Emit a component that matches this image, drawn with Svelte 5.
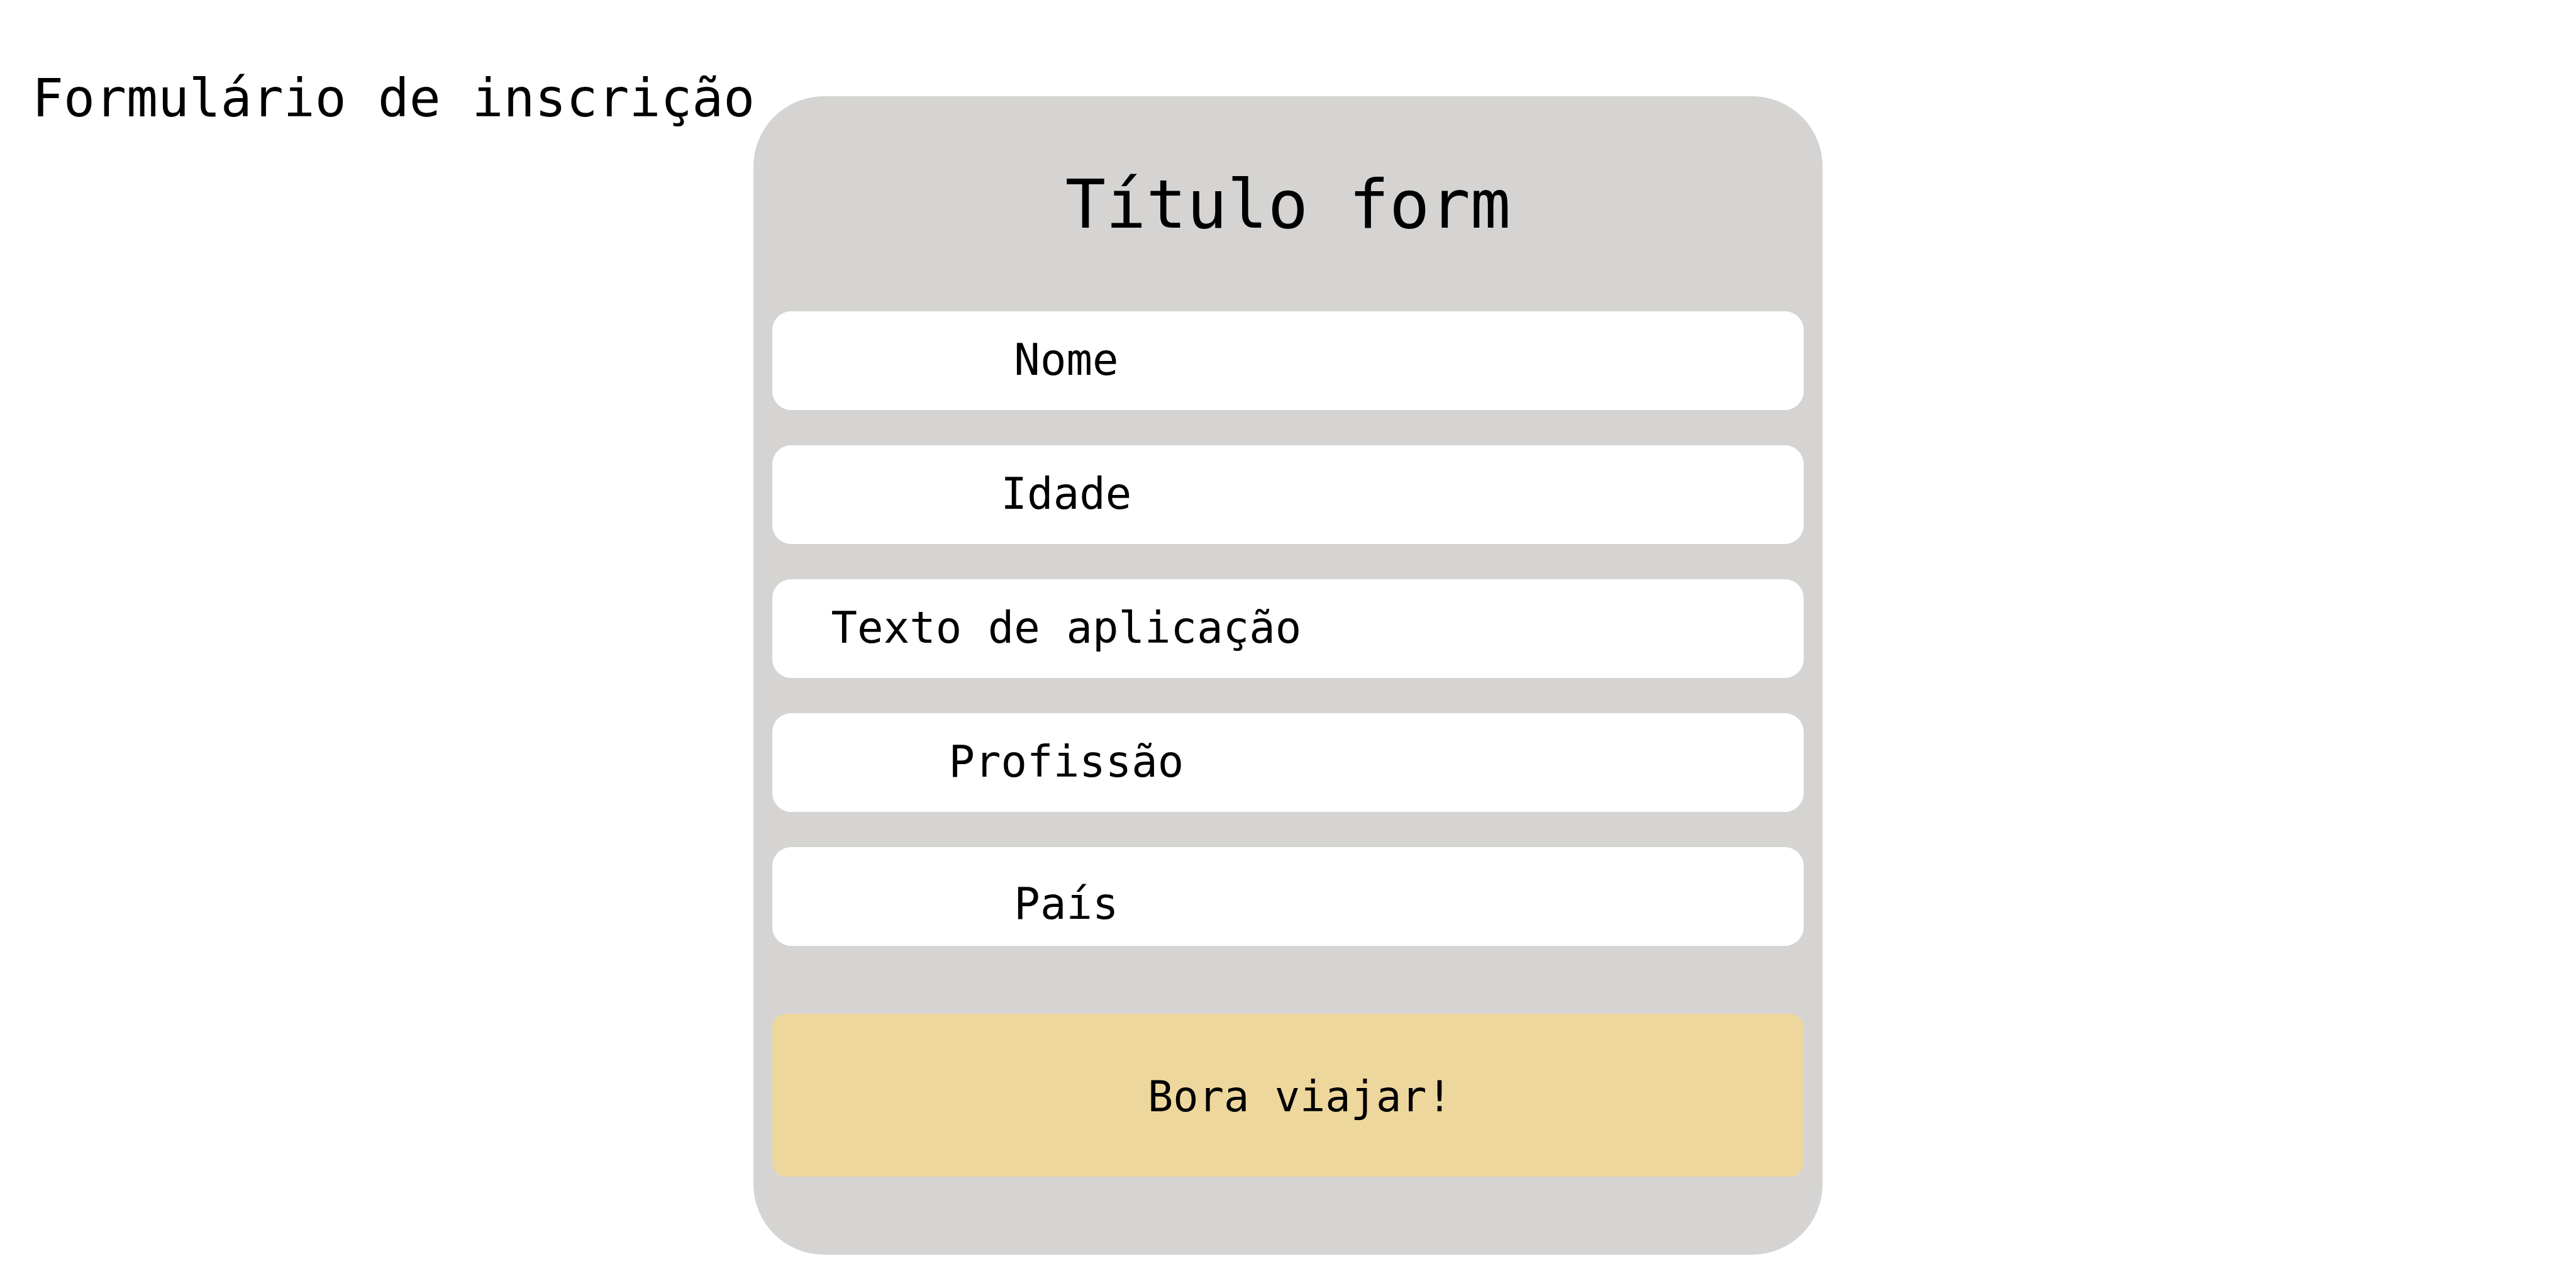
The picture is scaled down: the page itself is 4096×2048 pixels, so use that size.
<script>
  const fields = [
    { id: 'nome', label: 'Nome' },
    { id: 'idade', label: 'Idade' },
    { id: 'texto', label: 'Texto de aplicação' },
    { id: 'profissao', label: 'Profissão' },
    { id: 'pais', label: 'País', low: true }
  ];
</script>

<main class="page">
  <h1 class="page-title">Formulário de inscrição</h1>

  <form class="card" onsubmit={(event) => event.preventDefault()}>
    <h2 class="card-title">Título form</h2>

    <div class="fields">
      {#each fields as field (field.id)}
        <input
          class="field"
          class:low={field.low}
          type="text"
          id={field.id}
          name={field.id}
          placeholder={field.label}
          aria-label={field.label}
        />
      {/each}
    </div>

    <button class="submit" type="submit">Bora viajar!</button>
  </form>
</main>

<style>
  :global(body) {
    margin: 0;
    background: #fff;
  }

  .page {
    display: grid;
    grid-template-columns: minmax(0, 1fr) 41.5% minmax(0, 1fr);
    align-items: start;
    box-sizing: border-box;
    min-height: 100vh;
    padding: 153px 0 53px;
    color: #000;
    font-family: 'DejaVu Sans Mono', 'Liberation Mono', monospace;
  }

  .page-title {
    margin: -56px 0 0;
    padding-left: 51px;
    font-size: 83px;
    font-weight: 400;
    line-height: 120px;
    white-space: nowrap;
  }

  .card {
    grid-column: 2;
    display: flex;
    flex-direction: column;
    box-sizing: border-box;
    padding: 92px 30px 124px;
    border-radius: 112px;
    background: #d5d4d2;
  }

  .card-title {
    margin: 0 0 90px;
    font-size: 107px;
    font-weight: 400;
    line-height: 160px;
    text-align: center;
  }

  .fields {
    display: flex;
    flex-direction: column;
    gap: 56px;
  }

  .field {
    box-sizing: border-box;
    width: 100%;
    height: 157px;
    margin: 0;
    padding: 0 43% 4px 0;
    border: 0;
    border-radius: 30px;
    background: #fff;
    color: #000;
    font: inherit;
    font-size: 69px;
    text-align: center;
  }

  .field.low {
    padding-top: 22px;
    padding-bottom: 0;
  }

  .field::placeholder {
    color: #000;
    opacity: 1;
  }

  .submit {
    height: 259px;
    margin: 108px 0 0;
    padding: 4px 0 0 38px;
    border: 0;
    border-radius: 22px;
    background: #eed79d;
    color: #000;
    font: inherit;
    font-size: 67px;
    text-align: center;
    cursor: pointer;
  }
</style>
